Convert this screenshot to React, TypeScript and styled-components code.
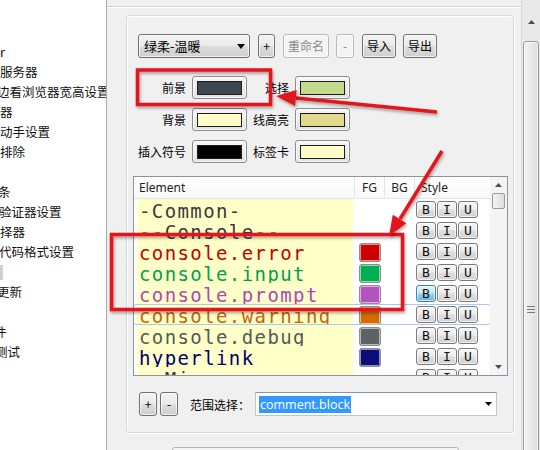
import React from 'react';
import styled, { createGlobalStyle, css } from 'styled-components';

const CJK = `"Noto Sans CJK SC", "Noto Sans", sans-serif`;

const GlobalStyle = createGlobalStyle`
  html, body { margin: 0; padding: 0; width: 540px; height: 450px; overflow: hidden; background: #f0f0f0; }
  body { font-family: ${CJK}; font-size: 12px; color: #000; }
  #root { width: 540px; height: 450px; }
`;

const Page = styled.div`
  position: relative;
  display: flex;
  width: 540px;
  height: 450px;
  overflow: hidden;
`;

/* ---------- left navigation tree ---------- */
const LeftPanel = styled.div`
  width: 106px;
  flex: none;
  background: #fff;
  border-right: 1px solid #a9a9a9;
  padding-top: 42px;
  overflow: hidden;
`;

const NavItem = styled.div<{ $shift?: number }>`
  height: 20px;
  line-height: 20px;
  white-space: nowrap;
  font-size: 12.5px;
  color: #111;
  margin-left: ${p => -(p.$shift ?? 0)}px;
`;

const NavMark = styled.div`
  height: 20px;
  display: flex;
  align-items: center;
  &::before {
    content: '';
    width: 3px;
    height: 15px;
    background: #d0d0d0;
  }
`;

/* ---------- main area ---------- */
const Main = styled.div`
  flex: 1;
  min-width: 0;
  display: flex;
  flex-direction: column;
`;

const TopStrip = styled.div`
  flex: none;
  height: 6px;
  border-bottom: 1px solid #d2d2d2;
  box-shadow: 0 1px 0 #fff;
`;

const GroupBox = styled.div`
  flex: none;
  margin: 8px 0 0 19px;
  width: 388px;
  height: 418px;
  box-sizing: border-box;
  border: 1px solid #d5d9dc;
  border-radius: 3px;
  box-shadow: inset 1px 1px 0 #fff, 1px 1px 0 #fff;
  padding: 18px 0 0 11px;
  display: flex;
  flex-direction: column;
`;

const Toolbar = styled.div`
  display: flex;
  align-items: center;
  height: 24px;
`;

const buttonBase = css`
  box-sizing: border-box;
  height: 24px;
  padding: 0;
  border: 1px solid #707070;
  border-radius: 3px;
  background: linear-gradient(#f2f2f2 0%, #ebebeb 48%, #dddddd 52%, #cfcfcf 100%);
  box-shadow: inset 0 0 0 1px rgba(255, 255, 255, 0.7);
  font-family: ${CJK};
  font-size: 12px;
  line-height: 20px;
  color: #000;
  display: flex;
  align-items: center;
  justify-content: center;
`;

const Button = styled.div<{ $w: number; $ml?: number; $disabled?: boolean }>`
  ${buttonBase};
  flex: none;
  width: ${p => p.$w}px;
  margin-left: ${p => p.$ml ?? 0}px;
  ${p =>
    p.$disabled &&
    css`
      border-color: #b6babd;
      background: #f4f4f4;
      color: #8a8a8a;
    `}
`;

const Combo = styled.div`
  ${buttonBase};
  flex: none;
  width: 112px;
  justify-content: space-between;
  padding: 0 4px 0 5px;
  font-size: 13px;
`;

const ComboArrow = () => (
  <svg width="8" height="5" viewBox="0 0 8 5">
    <path d="M0 0 L8 0 L4 5 Z" fill="#000" />
  </svg>
);

const ColorGrid = styled.div`
  margin-top: 18px;
  display: grid;
  grid-template-columns: 48px 55px 36px 55px;
  grid-auto-rows: 23px;
  column-gap: 6px;
  row-gap: 9px;
`;

const ColorLabel = styled.div`
  text-align: right;
  line-height: 23px;
  white-space: nowrap;
  font-size: 12px;
`;

const SwatchButton = styled.div`
  box-sizing: border-box;
  width: 55px;
  height: 23px;
  border: 1px solid #8c8c8c;
  border-radius: 3px;
  background: linear-gradient(#f7f7f7, #e2e2e2);
  box-shadow: inset 0 0 0 1px rgba(255, 255, 255, 0.7);
  display: flex;
  align-items: center;
  justify-content: center;
`;

const SwatchFill = styled.div<{ $c: string }>`
  box-sizing: border-box;
  width: 45px;
  height: 14px;
  border: 1px solid #1c1c1c;
  background: ${p => p.$c};
`;

/* ---------- table ---------- */
const Table = styled.div`
  margin: 13px 0 0 -5px;
  width: 375px;
  height: 200px;
  box-sizing: border-box;
  border: 1px solid #8e949c;
  background: #fff;
  display: flex;
  overflow: hidden;
`;

const ListArea = styled.div`
  flex: 1;
  min-width: 0;
  display: flex;
  flex-direction: column;
  overflow: hidden;
`;

const columns = '221px 30px 30px 1fr';

const HeaderRow = styled.div`
  flex: none;
  display: grid;
  grid-template-columns: ${columns};
  height: 21px;
  border-bottom: 1px solid #e5e5e5;
  background: linear-gradient(#ffffff, #f7f8fa);
`;

const HeaderCell = styled.div<{ $center?: boolean }>`
  padding-left: ${p => (p.$center ? 0 : 5)}px;
  text-align: ${p => (p.$center ? 'center' : 'left')};
  line-height: 21px;
  border-right: 1px solid #e5e5e5;
  font-family: "Noto Sans", "Open Sans", sans-serif;
  font-size: 12px;
  color: #1e1e1e;
  &:last-child { border-right: none; padding-left: 6px; }
`;

const Row = styled.div<{ $selected?: boolean }>`
  position: relative;
  flex: none;
  display: grid;
  grid-template-columns: ${columns};
  height: 21px;
  ${p =>
    p.$selected &&
    css`
      &::after {
        content: '';
        position: absolute;
        inset: 0 -1px 0 -1px;
        border: 1px solid #a9c9ee;
        border-radius: 3px;
        pointer-events: none;
      }
    `}
`;

const ElementCell = styled.div`
  padding: 0 2px 0 3px;
`;

const ElementText = styled.div<{ $c: string }>`
  height: 21px;
  background: #ffffc8;
  padding-left: 2px;
  font-family: "DejaVu Sans Mono", monospace;
  font-size: 19px;
  letter-spacing: 1.4px;
  line-height: 25px;
  white-space: nowrap;
  color: ${p => p.$c};
`;

const FgCell = styled.div`
  padding: 2px 0 0 4px;
`;

const FgSwatch = styled.div<{ $c: string }>`
  box-sizing: border-box;
  width: 22px;
  height: 19px;
  border: 1px solid #8d8d8d;
  border-radius: 3px;
  background: ${p => p.$c};
  box-shadow: inset 0 0 0 1px rgba(255, 255, 255, 0.55);
`;

const StyleCell = styled.div`
  display: flex;
  gap: 1px;
  padding: 2px 0 0 1px;
`;

const StyleButton = styled.div<{ $on?: boolean }>`
  box-sizing: border-box;
  width: 20px;
  height: 17px;
  border: 1px solid #7a7a7a;
  border-radius: 3px;
  background: linear-gradient(#f6f6f6 0%, #ececec 48%, #dedede 52%, #d2d2d2 100%);
  box-shadow: inset 0 0 0 1px rgba(255, 255, 255, 0.7);
  font-family: "DejaVu Sans Mono", monospace;
  font-size: 13px;
  line-height: 15px;
  text-align: center;
  color: #111;
  ${p =>
    p.$on &&
    css`
      border-color: #3c7fb1;
      background: linear-gradient(#e5f4fc 0%, #c4e5f6 48%, #98d1ef 52%, #68b3db 100%);
    `}
`;

const InnerScroll = styled.div`
  flex: none;
  width: 17px;
  background: #f4f4f4;
  display: flex;
  flex-direction: column;
  align-items: center;
`;

const ScrollArrowBox = styled.div<{ $h: number }>`
  height: ${p => p.$h}px;
  width: 100%;
  display: flex;
  align-items: center;
  justify-content: center;
  flex: none;
`;

const InnerThumb = styled.div`
  box-sizing: border-box;
  width: 13px;
  height: 16px;
  border: 1px solid #9a9a9a;
  border-radius: 2px;
  background: linear-gradient(90deg, #f4f4f4, #dcdcdc);
  flex: none;
`;

const Spacer = styled.div`
  flex: 1;
`;

/* ---------- bottom row ---------- */
const BottomRow = styled.div`
  margin-top: 16px;
  display: flex;
  align-items: center;
  height: 24px;
`;

const RangeLabel = styled.div`
  margin-left: 12px;
  font-size: 12px;
  white-space: nowrap;
`;

const RangeInput = styled.div`
  box-sizing: border-box;
  margin-left: 5px;
  width: 242px;
  height: 24px;
  background: #fff;
  border: 1px solid #b9c6d6;
  border-top-color: #7d97b4;
  display: flex;
  align-items: center;
  justify-content: space-between;
  padding: 0 4px 0 3px;
`;

const Selected = styled.span`
  background: #3399ff;
  color: #fff;
  font-family: "Open Sans", "Noto Sans", sans-serif;
  font-size: 12.5px;
  line-height: 17px;
  padding: 0 1px;
`;

const DialogButtonEdge = styled.div`
  flex: none;
  margin: 14px 0 0 65px;
  width: 287px;
  height: 24px;
  box-sizing: border-box;
  border: 1px solid #b4b4b4;
  border-radius: 3px;
  background: linear-gradient(#f6f6f6, #e6e6e6);
`;

/* ---------- outer scrollbar ---------- */
const OuterScroll = styled.div`
  flex: none;
  width: 19px;
  box-sizing: border-box;
  background: #e9e9e9;
  border-left: 1px solid #d9d9d9;
  padding-top: 13px;
  display: flex;
  flex-direction: column;
  align-items: center;
`;

const OuterThumb = styled.div`
  margin-top: 10px;
  box-sizing: border-box;
  width: 16px;
  height: 536px;
  flex: none;
  border: 1px solid #989898;
  border-radius: 3px;
  background: linear-gradient(90deg, #f3f3f3, #dedede);
  box-shadow: inset 0 0 0 1px rgba(255, 255, 255, 0.6);
  display: flex;
  align-items: center;
  justify-content: center;
`;

const Overlay = styled.svg`
  position: absolute;
  left: 0;
  top: 0;
  pointer-events: none;
`;

const UpArrow = ({ c = '#4d4d4d' }: { c?: string }) => (
  <svg width="7" height="4" viewBox="0 0 7 4">
    <path d="M0 4 L3.5 0 L7 4 Z" fill={c} />
  </svg>
);
const DownArrow = ({ c = '#4d4d4d' }: { c?: string }) => (
  <svg width="7" height="4" viewBox="0 0 7 4">
    <path d="M0 0 L7 0 L3.5 4 Z" fill={c} />
  </svg>
);

type RowData = { name: string; color: string; fg?: string; bOn?: boolean; selected?: boolean };

const rows: RowData[] = [
  { name: '-Common-', color: '#3a3a3a' },
  { name: '--Console--', color: '#3a3a3a' },
  { name: 'console.error', color: '#c20000', fg: '#cc0000' },
  { name: 'console.input', color: '#00a04c', fg: '#00b050' },
  { name: 'console.prompt', color: '#b048b8', fg: '#b552c2', bOn: true },
  { name: 'console.warning', color: '#c4660c', fg: '#d46a02', selected: true },
  { name: 'console.debug', color: '#535a55', fg: '#5d6266' },
  { name: 'hyperlink', color: '#00006e', fg: '#0d0d7a' },
  { name: '--Misc--', color: '#3a3a3a' },
];

const navItems: { t: string; s?: number }[] = [
  { t: 'r' },
  { t: '服务器' },
  { t: '边看浏览器宽高设置', s: 3 },
  { t: '器' },
  { t: '动手设置' },
  { t: '排除' },
  { t: '' },
  { t: '条', s: 2 },
  { t: '验证器设置', s: 1 },
  { t: '择器' },
  { t: '代码格式设置', s: 1 },
];

const colorRows: [string, string, string, string][] = [
  ['前景', '#3e4750', '选择', '#c3d98e'],
  ['背景', '#ffffc8', '线高亮', '#e2da8b'],
  ['插入符号', '#000000', '标签卡', '#ffffc8'],
];

export default function App() {
  return (
    <>
      <GlobalStyle />
      <Page>
        <LeftPanel>
          {navItems.map((n, i) => (
            <NavItem key={i} $shift={n.s}>
              {n.t}
            </NavItem>
          ))}
          <NavMark />
          <NavItem $shift={3}>更新</NavItem>
          <NavItem />
          <NavItem $shift={6}>件</NavItem>
          <NavItem $shift={5}>测试</NavItem>
        </LeftPanel>

        <Main>
          <TopStrip />
          <GroupBox>
            <Toolbar>
              <Combo>
                <span>绿柔-温暖</span>
                <ComboArrow />
              </Combo>
              <Button $w={17} $ml={8}>+</Button>
              <Button $w={46} $ml={8} $disabled>重命名</Button>
              <Button $w={18} $ml={7} $disabled>-</Button>
              <Button $w={34} $ml={8}>导入</Button>
              <Button $w={34} $ml={7}>导出</Button>
            </Toolbar>

            <ColorGrid>
              {colorRows.map(([l1, c1, l2, c2]) => (
                <React.Fragment key={l1}>
                  <ColorLabel>{l1}</ColorLabel>
                  <SwatchButton>
                    <SwatchFill $c={c1} />
                  </SwatchButton>
                  <ColorLabel>{l2}</ColorLabel>
                  <SwatchButton>
                    <SwatchFill $c={c2} />
                  </SwatchButton>
                </React.Fragment>
              ))}
            </ColorGrid>

            <Table>
              <ListArea>
                <HeaderRow>
                  <HeaderCell>Element</HeaderCell>
                  <HeaderCell $center>FG</HeaderCell>
                  <HeaderCell $center>BG</HeaderCell>
                  <HeaderCell>Style</HeaderCell>
                </HeaderRow>
                {rows.map(r => (
                  <Row key={r.name} $selected={r.selected}>
                    <ElementCell>
                      <ElementText $c={r.color}>{r.name}</ElementText>
                    </ElementCell>
                    <FgCell>{r.fg && <FgSwatch $c={r.fg} />}</FgCell>
                    <div />
                    <StyleCell>
                      <StyleButton $on={r.bOn}>B</StyleButton>
                      <StyleButton>I</StyleButton>
                      <StyleButton>U</StyleButton>
                    </StyleCell>
                  </Row>
                ))}
              </ListArea>
              <InnerScroll>
                <ScrollArrowBox $h={16}>
                  <UpArrow />
                </ScrollArrowBox>
                <InnerThumb />
                <Spacer />
                <ScrollArrowBox $h={17}>
                  <DownArrow />
                </ScrollArrowBox>
              </InnerScroll>
            </Table>

            <BottomRow>
              <Button $w={18} $ml={1}>+</Button>
              <Button $w={18} $ml={3}>-</Button>
              <RangeLabel>范围选择：</RangeLabel>
              <RangeInput>
                <Selected>comment.block</Selected>
                <DownArrow c="#000" />
              </RangeInput>
            </BottomRow>
          </GroupBox>
          <DialogButtonEdge />
        </Main>

        <OuterScroll>
          <ScrollArrowBox $h={18}>
            <UpArrow />
          </ScrollArrowBox>
          <OuterThumb>
            <svg width="8" height="7" viewBox="0 0 8 7">
              <path d="M0 0.5 H8 M0 3.5 H8 M0 6.5 H8" stroke="#7a7a7a" strokeWidth="1" />
            </svg>
          </OuterThumb>
        </OuterScroll>

        <Overlay width="540" height="450" viewBox="0 0 540 450">
          <defs>
            <filter id="sh" x="-20%" y="-20%" width="140%" height="140%">
              <feDropShadow dx="1" dy="2" stdDeviation="1.5" floodColor="#000" floodOpacity="0.35" />
            </filter>
          </defs>
          <g filter="url(#sh)" stroke="#e3161b" fill="none" strokeWidth="3.5">
            <rect x="137.5" y="70" width="133" height="34.5" />
            <rect x="111.5" y="234.5" width="291" height="75" />
            <line x1="437" y1="112" x2="296" y2="98" />
            <line x1="442" y1="151" x2="400" y2="219" />
          </g>
          <g filter="url(#sh)" fill="#e3161b">
            <polygon points="276,96 296.7,90 295.1,106" />
            <polygon points="389,236 392.8,214.8 406.4,223.2" />
          </g>
        </Overlay>
      </Page>
    </>
  );
}
